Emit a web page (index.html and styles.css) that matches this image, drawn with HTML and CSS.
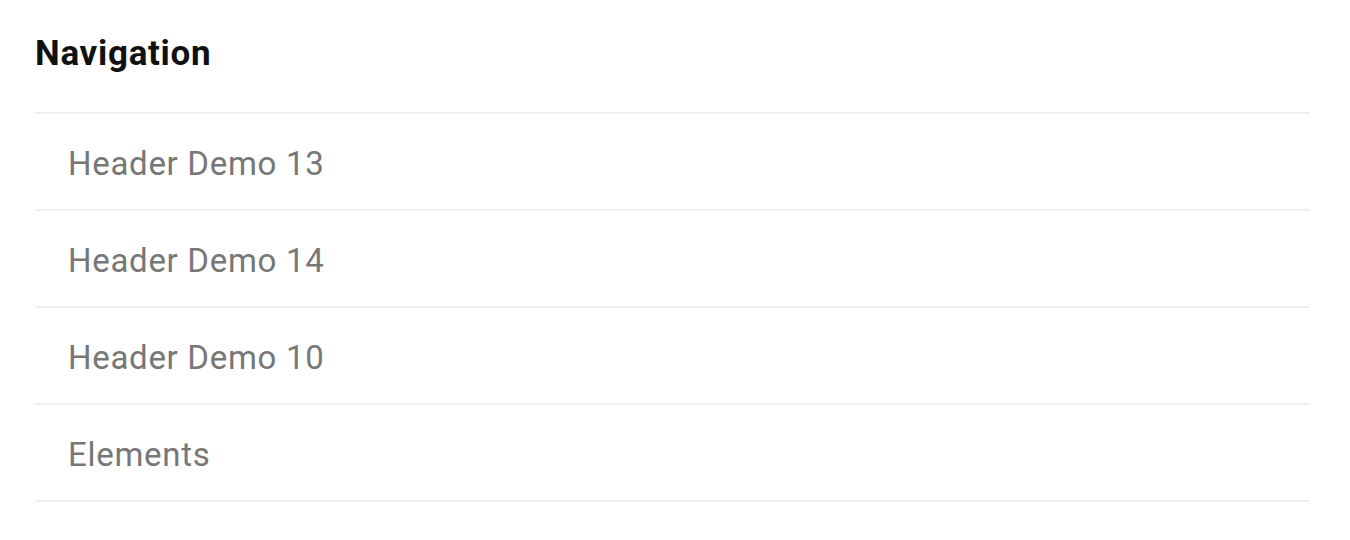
FILE: index.html
```html
<!DOCTYPE html>
<html>
<head>
<meta charset="utf-8">
<link rel="stylesheet" href="styles.css">
</head>
<body>
<div class="widget">
  <h2 class="widget-title">Navigation</h2>
  <ul class="nav-list">
    <li class="nav-item">Header Demo 13</li>
    <li class="nav-item">Header Demo 14</li>
    <li class="nav-item">Header Demo 10</li>
    <li class="nav-item">Elements</li>
  </ul>
</div>
</body>
</html>
```
FILE: styles.css
```css
html, body {
  margin: 0;
  background: #fff;
}
.widget {
  width: 1275px;
  padding: 27px 0 0 35px;
  font-family: Roboto, "Liberation Sans", sans-serif;
}
.widget-title {
  margin: 0;
  height: 85px;
  font-size: 35px;
  font-weight: 700;
  line-height: 54px;
  letter-spacing: 0.7px;
  color: #111;
}
.nav-list {
  list-style: none;
  margin: 0;
  padding: 0;
  border-top: 2px solid #efefef;
}
.nav-item {
  height: 95px;
  border-bottom: 2px solid #efefef;
  display: flex;
  align-items: center;
  padding: 3px 0 0 33px;
  box-sizing: border-box;
  height: 97px;
  font-size: 33px;
  letter-spacing: 0.7px;
  color: #777;
}
```
